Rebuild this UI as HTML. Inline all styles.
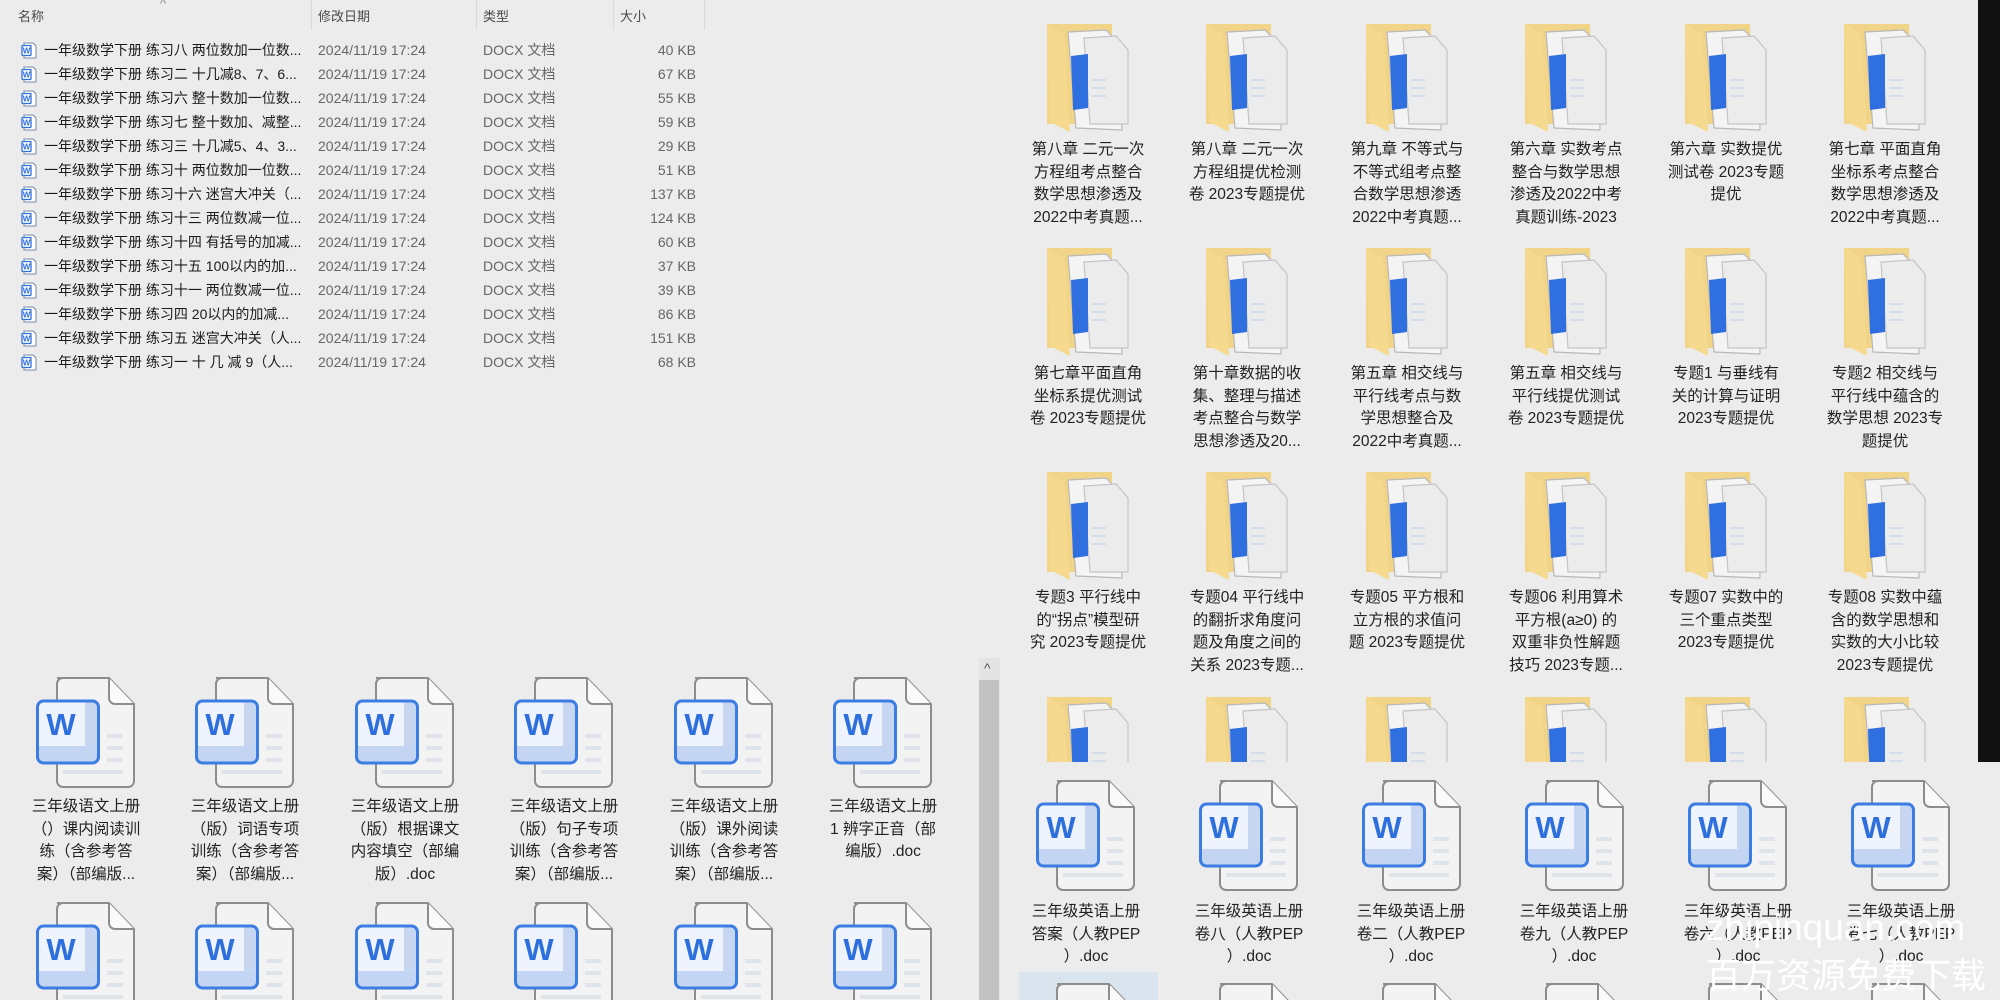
<!DOCTYPE html>
<html style="width:2000px;height:1000px;overflow:hidden"><head><meta charset="utf-8">
<style>
*{margin:0;padding:0;box-sizing:border-box}
body{width:2000px;height:1000px;overflow:hidden;background:#ececec;position:relative;font-family:"Liberation Sans","Noto Sans CJK SC",sans-serif;color:#1e1e1e}
.p{position:absolute;overflow:hidden;background:#ececec}
.hd{position:absolute;top:6px;font-size:13px;color:#4a4a4a}
.sep{position:absolute;top:0;width:1px;height:30px;background:#dadada}
.row{position:absolute;left:0;height:24px;width:1000px;font-size:14px;line-height:24px;white-space:nowrap}
.row span{position:absolute}
.n{left:44px;color:#1b1b1b}
.d{left:318px;color:#666}
.t{left:483px;color:#666}
.s{right:304px;color:#666;text-align:right}
.ic{position:absolute;left:21px;top:4px;width:17px;height:17px}
.lb{position:absolute;width:160px;text-align:center;font-size:15.5px;line-height:22.5px;color:#222;white-space:nowrap}
svg.i{position:absolute}
</style></head><body>
<svg width="0" height="0" style="position:absolute;left:0;top:0">
<defs>
<symbol id="w" viewBox="0 0 100 112">
<path d="M21 1 H73 L98 27 V104 a6 6 0 0 1 -6 6 H27 a6 6 0 0 1 -6 -6 V7 a6 6 0 0 1 6 -6z" fill="#f3f3f3" stroke="#8d8d8d" stroke-width="2"/>
<path d="M73 1 V21 a6 6 0 0 0 6 6 H98" fill="#fafafa" stroke="#8d8d8d" stroke-width="2"/>
<rect x="71" y="57" width="16" height="4" fill="#dfe3ea"/>
<rect x="71" y="69" width="16" height="4" fill="#dfe3ea"/>
<rect x="71" y="81" width="16" height="4" fill="#dfe3ea"/>
<rect x="27" y="93" width="60" height="4" fill="#dfe3ea"/>
<rect x="1.5" y="24" width="61" height="62" rx="6" fill="#eef3fc"/>
<rect x="49" y="25" width="12.5" height="60" fill="#c8d7f1"/>
<rect x="2.5" y="69" width="59" height="16" fill="#c3d5f3"/>
<rect x="1.5" y="24" width="61" height="62" rx="6" fill="none" stroke="#3c7de3" stroke-width="3"/>
<text x="25" y="58" text-anchor="middle" font-family="Liberation Sans,sans-serif" font-weight="bold" font-size="31" fill="#2d6fdc">W</text>
</symbol>
<symbol id="f" viewBox="0 0 84 108">
<path d="M1 0 H66 V100 H1z" fill="#f2d488"/>
<path d="M22 8 L60 6 L74 20 L76 106 L30 104z" fill="#f4f4f4" stroke="#b8b8b8" stroke-width="1.2"/>
<path d="M38 14 L70 12 L82 26 L82 100 L44 100z" fill="#ececec" stroke="#c4c4c4" stroke-width="1.2"/>
<path d="M25 32 L42 30 L42 84 L27 86z" fill="#2f6fe0"/>
<path d="M46 56 h14 M46 64 h14 M46 72 h14" stroke="#d5dcea" stroke-width="2"/>
<path d="M1 0 L18 10 L24 108 L4 98z" fill="#f5d98f"/>
</symbol>
<symbol id="sw" viewBox="0 0 17 17">
<path d="M3 1 H12 L15 4 V16 H3z" fill="#fff" stroke="#7a8aa8" stroke-width="1"/>
<rect x="1" y="3.5" width="9" height="10" rx="1" fill="#fff" stroke="#2f6fdc" stroke-width="1.3"/>
<text x="5.5" y="11.5" text-anchor="middle" font-family="Liberation Sans,sans-serif" font-weight="bold" font-size="8" fill="#2f6fdc">W</text>
</symbol>
</defs></svg>

<div class="p" style="left:0;top:0;width:1000px;height:658px;background:#ececec">
<div class="hd" style="left:18px">名称</div>
<div class="hd" style="left:160px;top:-4px;color:#888">^</div>
<div class="sep" style="left:311px"></div>
<div class="hd" style="left:318px">修改日期</div>
<div class="sep" style="left:476px"></div>
<div class="hd" style="left:483px">类型</div>
<div class="sep" style="left:613px"></div>
<div class="hd" style="left:620px">大小</div>
<div class="sep" style="left:704px"></div>

<div class="row" style="top:38px"><svg class="ic"><use href="#sw"/></svg><span class="n">一年级数学下册 练习八 两位数加一位数...</span><span class="d">2024/11/19 17:24</span><span class="t">DOCX 文档</span><span class="s">40 KB</span></div>
<div class="row" style="top:62px"><svg class="ic"><use href="#sw"/></svg><span class="n">一年级数学下册 练习二 十几减8、7、6...</span><span class="d">2024/11/19 17:24</span><span class="t">DOCX 文档</span><span class="s">67 KB</span></div>
<div class="row" style="top:86px"><svg class="ic"><use href="#sw"/></svg><span class="n">一年级数学下册 练习六 整十数加一位数...</span><span class="d">2024/11/19 17:24</span><span class="t">DOCX 文档</span><span class="s">55 KB</span></div>
<div class="row" style="top:110px"><svg class="ic"><use href="#sw"/></svg><span class="n">一年级数学下册 练习七 整十数加、减整...</span><span class="d">2024/11/19 17:24</span><span class="t">DOCX 文档</span><span class="s">59 KB</span></div>
<div class="row" style="top:134px"><svg class="ic"><use href="#sw"/></svg><span class="n">一年级数学下册 练习三 十几减5、4、3...</span><span class="d">2024/11/19 17:24</span><span class="t">DOCX 文档</span><span class="s">29 KB</span></div>
<div class="row" style="top:158px"><svg class="ic"><use href="#sw"/></svg><span class="n">一年级数学下册 练习十 两位数加一位数...</span><span class="d">2024/11/19 17:24</span><span class="t">DOCX 文档</span><span class="s">51 KB</span></div>
<div class="row" style="top:182px"><svg class="ic"><use href="#sw"/></svg><span class="n">一年级数学下册 练习十六 迷宫大冲关（...</span><span class="d">2024/11/19 17:24</span><span class="t">DOCX 文档</span><span class="s">137 KB</span></div>
<div class="row" style="top:206px"><svg class="ic"><use href="#sw"/></svg><span class="n">一年级数学下册 练习十三 两位数减一位...</span><span class="d">2024/11/19 17:24</span><span class="t">DOCX 文档</span><span class="s">124 KB</span></div>
<div class="row" style="top:230px"><svg class="ic"><use href="#sw"/></svg><span class="n">一年级数学下册 练习十四 有括号的加减...</span><span class="d">2024/11/19 17:24</span><span class="t">DOCX 文档</span><span class="s">60 KB</span></div>
<div class="row" style="top:254px"><svg class="ic"><use href="#sw"/></svg><span class="n">一年级数学下册 练习十五 100以内的加...</span><span class="d">2024/11/19 17:24</span><span class="t">DOCX 文档</span><span class="s">37 KB</span></div>
<div class="row" style="top:278px"><svg class="ic"><use href="#sw"/></svg><span class="n">一年级数学下册 练习十一 两位数减一位...</span><span class="d">2024/11/19 17:24</span><span class="t">DOCX 文档</span><span class="s">39 KB</span></div>
<div class="row" style="top:302px"><svg class="ic"><use href="#sw"/></svg><span class="n">一年级数学下册 练习四 20以内的加减...</span><span class="d">2024/11/19 17:24</span><span class="t">DOCX 文档</span><span class="s">86 KB</span></div>
<div class="row" style="top:326px"><svg class="ic"><use href="#sw"/></svg><span class="n">一年级数学下册 练习五 迷宫大冲关（人...</span><span class="d">2024/11/19 17:24</span><span class="t">DOCX 文档</span><span class="s">151 KB</span></div>
<div class="row" style="top:350px"><svg class="ic"><use href="#sw"/></svg><span class="n">一年级数学下册 练习一 十 几 减 9（人...</span><span class="d">2024/11/19 17:24</span><span class="t">DOCX 文档</span><span class="s">68 KB</span></div>
</div>

<div class="p" style="left:0;top:658px;width:1000px;height:342px">
<svg class="i" style="left:36px;top:19px" width="100" height="112"><use href="#w"/></svg>
<svg class="i" style="left:195px;top:19px" width="100" height="112"><use href="#w"/></svg>
<svg class="i" style="left:355px;top:19px" width="100" height="112"><use href="#w"/></svg>
<svg class="i" style="left:514px;top:19px" width="100" height="112"><use href="#w"/></svg>
<svg class="i" style="left:674px;top:19px" width="100" height="112"><use href="#w"/></svg>
<svg class="i" style="left:833px;top:19px" width="100" height="112"><use href="#w"/></svg>
<div class="lb" style="left:6px;top:138px">三年级语文上册<br>（）课内阅读训<br>练（含参考答<br>案）（部编版...</div>
<div class="lb" style="left:165px;top:138px">三年级语文上册<br>（版）词语专项<br>训练（含参考答<br>案）（部编版...</div>
<div class="lb" style="left:325px;top:138px">三年级语文上册<br>（版）根据课文<br>内容填空（部编<br>版）.doc</div>
<div class="lb" style="left:484px;top:138px">三年级语文上册<br>（版）句子专项<br>训练（含参考答<br>案）（部编版...</div>
<div class="lb" style="left:644px;top:138px">三年级语文上册<br>（版）课外阅读<br>训练（含参考答<br>案）（部编版...</div>
<div class="lb" style="left:803px;top:138px">三年级语文上册<br>1 辨字正音（部<br>编版）.doc</div>
<svg class="i" style="left:36px;top:244px" width="100" height="98" viewBox="0 0 100 98" preserveAspectRatio="xMinYMin slice"><use href="#w" width="100" height="112"/></svg>
<svg class="i" style="left:195px;top:244px" width="100" height="98" viewBox="0 0 100 98" preserveAspectRatio="xMinYMin slice"><use href="#w" width="100" height="112"/></svg>
<svg class="i" style="left:355px;top:244px" width="100" height="98" viewBox="0 0 100 98" preserveAspectRatio="xMinYMin slice"><use href="#w" width="100" height="112"/></svg>
<svg class="i" style="left:514px;top:244px" width="100" height="98" viewBox="0 0 100 98" preserveAspectRatio="xMinYMin slice"><use href="#w" width="100" height="112"/></svg>
<svg class="i" style="left:674px;top:244px" width="100" height="98" viewBox="0 0 100 98" preserveAspectRatio="xMinYMin slice"><use href="#w" width="100" height="112"/></svg>
<svg class="i" style="left:833px;top:244px" width="100" height="98" viewBox="0 0 100 98" preserveAspectRatio="xMinYMin slice"><use href="#w" width="100" height="112"/></svg>
<div style="position:absolute;left:979px;top:0;width:21px;height:342px;background:#e4e4e4"></div>
<div style="position:absolute;left:979px;top:22px;width:20px;height:320px;background:#c2c2c2"></div>
<div style="position:absolute;left:984px;top:2px;font-size:14px;color:#555">^</div>
</div>

<div class="p" style="left:1000px;top:0;width:978px;height:762px">
<svg class="i" style="left:46px;top:24px" width="84" height="108"><use href="#f"/></svg>
<svg class="i" style="left:205px;top:24px" width="84" height="108"><use href="#f"/></svg>
<svg class="i" style="left:365px;top:24px" width="84" height="108"><use href="#f"/></svg>
<svg class="i" style="left:524px;top:24px" width="84" height="108"><use href="#f"/></svg>
<svg class="i" style="left:684px;top:24px" width="84" height="108"><use href="#f"/></svg>
<svg class="i" style="left:843px;top:24px" width="84" height="108"><use href="#f"/></svg>
<div class="lb" style="left:8px;top:139px">第八章 二元一次<br>方程组考点整合<br>数学思想渗透及<br>2022中考真题...</div>
<div class="lb" style="left:167px;top:139px">第八章 二元一次<br>方程组提优检测<br>卷 2023专题提优</div>
<div class="lb" style="left:327px;top:139px">第九章 不等式与<br>不等式组考点整<br>合数学思想渗透<br>2022中考真题...</div>
<div class="lb" style="left:486px;top:139px">第六章 实数考点<br>整合与数学思想<br>渗透及2022中考<br>真题训练-2023</div>
<div class="lb" style="left:646px;top:139px">第六章 实数提优<br>测试卷 2023专题<br>提优</div>
<div class="lb" style="left:805px;top:139px">第七章 平面直角<br>坐标系考点整合<br>数学思想渗透及<br>2022中考真题...</div>

<svg class="i" style="left:46px;top:248px" width="84" height="108"><use href="#f"/></svg>
<svg class="i" style="left:205px;top:248px" width="84" height="108"><use href="#f"/></svg>
<svg class="i" style="left:365px;top:248px" width="84" height="108"><use href="#f"/></svg>
<svg class="i" style="left:524px;top:248px" width="84" height="108"><use href="#f"/></svg>
<svg class="i" style="left:684px;top:248px" width="84" height="108"><use href="#f"/></svg>
<svg class="i" style="left:843px;top:248px" width="84" height="108"><use href="#f"/></svg>
<div class="lb" style="left:8px;top:363px">第七章平面直角<br>坐标系提优测试<br>卷 2023专题提优</div>
<div class="lb" style="left:167px;top:363px">第十章数据的收<br>集、整理与描述<br>考点整合与数学<br>思想渗透及20...</div>
<div class="lb" style="left:327px;top:363px">第五章 相交线与<br>平行线考点与数<br>学思想整合及<br>2022中考真题...</div>
<div class="lb" style="left:486px;top:363px">第五章 相交线与<br>平行线提优测试<br>卷 2023专题提优</div>
<div class="lb" style="left:646px;top:363px">专题1 与垂线有<br>关的计算与证明<br>2023专题提优</div>
<div class="lb" style="left:805px;top:363px">专题2 相交线与<br>平行线中蕴含的<br>数学思想 2023专<br>题提优</div>

<svg class="i" style="left:46px;top:472px" width="84" height="108"><use href="#f"/></svg>
<svg class="i" style="left:205px;top:472px" width="84" height="108"><use href="#f"/></svg>
<svg class="i" style="left:365px;top:472px" width="84" height="108"><use href="#f"/></svg>
<svg class="i" style="left:524px;top:472px" width="84" height="108"><use href="#f"/></svg>
<svg class="i" style="left:684px;top:472px" width="84" height="108"><use href="#f"/></svg>
<svg class="i" style="left:843px;top:472px" width="84" height="108"><use href="#f"/></svg>
<div class="lb" style="left:8px;top:587px">专题3 平行线中<br>的“拐点”模型研<br>究 2023专题提优</div>
<div class="lb" style="left:167px;top:587px">专题04 平行线中<br>的翻折求角度问<br>题及角度之间的<br>关系 2023专题...</div>
<div class="lb" style="left:327px;top:587px">专题05 平方根和<br>立方根的求值问<br>题 2023专题提优</div>
<div class="lb" style="left:486px;top:587px">专题06 利用算术<br>平方根(a≥0) 的<br>双重非负性解题<br>技巧 2023专题...</div>
<div class="lb" style="left:646px;top:587px">专题07 实数中的<br>三个重点类型<br>2023专题提优</div>
<div class="lb" style="left:805px;top:587px">专题08 实数中蕴<br>含的数学思想和<br>实数的大小比较<br>2023专题提优</div>

<svg class="i" style="left:46px;top:697px" width="84" height="65" viewBox="0 0 84 65" preserveAspectRatio="xMinYMin slice"><use href="#f" width="84" height="108"/></svg>
<svg class="i" style="left:205px;top:697px" width="84" height="65" viewBox="0 0 84 65" preserveAspectRatio="xMinYMin slice"><use href="#f" width="84" height="108"/></svg>
<svg class="i" style="left:365px;top:697px" width="84" height="65" viewBox="0 0 84 65" preserveAspectRatio="xMinYMin slice"><use href="#f" width="84" height="108"/></svg>
<svg class="i" style="left:524px;top:697px" width="84" height="65" viewBox="0 0 84 65" preserveAspectRatio="xMinYMin slice"><use href="#f" width="84" height="108"/></svg>
<svg class="i" style="left:684px;top:697px" width="84" height="65" viewBox="0 0 84 65" preserveAspectRatio="xMinYMin slice"><use href="#f" width="84" height="108"/></svg>
<svg class="i" style="left:843px;top:697px" width="84" height="65" viewBox="0 0 84 65" preserveAspectRatio="xMinYMin slice"><use href="#f" width="84" height="108"/></svg>
</div>
<div style="position:absolute;left:1978px;top:0;width:22px;height:762px;background:#111"></div>

<div class="p" style="left:1000px;top:762px;width:1000px;height:238px">
<div style="position:absolute;left:19px;top:210px;width:139px;height:28px;background:#d9e4ee"></div>
<svg class="i" style="left:36px;top:18px" width="100" height="112"><use href="#w"/></svg>
<svg class="i" style="left:199px;top:18px" width="100" height="112"><use href="#w"/></svg>
<svg class="i" style="left:362px;top:18px" width="100" height="112"><use href="#w"/></svg>
<svg class="i" style="left:525px;top:18px" width="100" height="112"><use href="#w"/></svg>
<svg class="i" style="left:688px;top:18px" width="100" height="112"><use href="#w"/></svg>
<svg class="i" style="left:851px;top:18px" width="100" height="112"><use href="#w"/></svg>
<div class="lb" style="left:6px;top:139px">三年级英语上册<br>答案（人教PEP<br>）.doc</div>
<div class="lb" style="left:169px;top:139px">三年级英语上册<br>卷八（人教PEP<br>）.doc</div>
<div class="lb" style="left:331px;top:139px">三年级英语上册<br>卷二（人教PEP<br>）.doc</div>
<div class="lb" style="left:494px;top:139px">三年级英语上册<br>卷九（人教PEP<br>）.doc</div>
<div class="lb" style="left:658px;top:139px">三年级英语上册<br>卷六（人教PEP<br>）.doc</div>
<div class="lb" style="left:821px;top:139px">三年级英语上册<br>卷七（人教PEP<br>）.doc</div>
<svg class="i" style="left:36px;top:221px" width="100" height="17" viewBox="0 0 100 17" preserveAspectRatio="xMinYMin slice"><use href="#w" width="100" height="112"/></svg>
<svg class="i" style="left:199px;top:221px" width="100" height="17" viewBox="0 0 100 17" preserveAspectRatio="xMinYMin slice"><use href="#w" width="100" height="112"/></svg>
<svg class="i" style="left:362px;top:221px" width="100" height="17" viewBox="0 0 100 17" preserveAspectRatio="xMinYMin slice"><use href="#w" width="100" height="112"/></svg>
<svg class="i" style="left:525px;top:221px" width="100" height="17" viewBox="0 0 100 17" preserveAspectRatio="xMinYMin slice"><use href="#w" width="100" height="112"/></svg>
<svg class="i" style="left:688px;top:221px" width="100" height="17" viewBox="0 0 100 17" preserveAspectRatio="xMinYMin slice"><use href="#w" width="100" height="112"/></svg>
<svg class="i" style="left:851px;top:221px" width="100" height="17" viewBox="0 0 100 17" preserveAspectRatio="xMinYMin slice"><use href="#w" width="100" height="112"/></svg>
</div>

<div style="position:absolute;left:1706px;top:906px;width:290px;font-size:37px;line-height:44px;color:#fff;white-space:nowrap;overflow:hidden;font-family:'Liberation Sans',sans-serif">zhipinquan.com</div>
<div style="position:absolute;left:1706px;top:952px;width:290px;font-size:35px;line-height:44px;color:#fff;white-space:nowrap;overflow:hidden;font-family:'Noto Sans CJK SC',sans-serif">百万资源免费下载</div>
</body></html>
